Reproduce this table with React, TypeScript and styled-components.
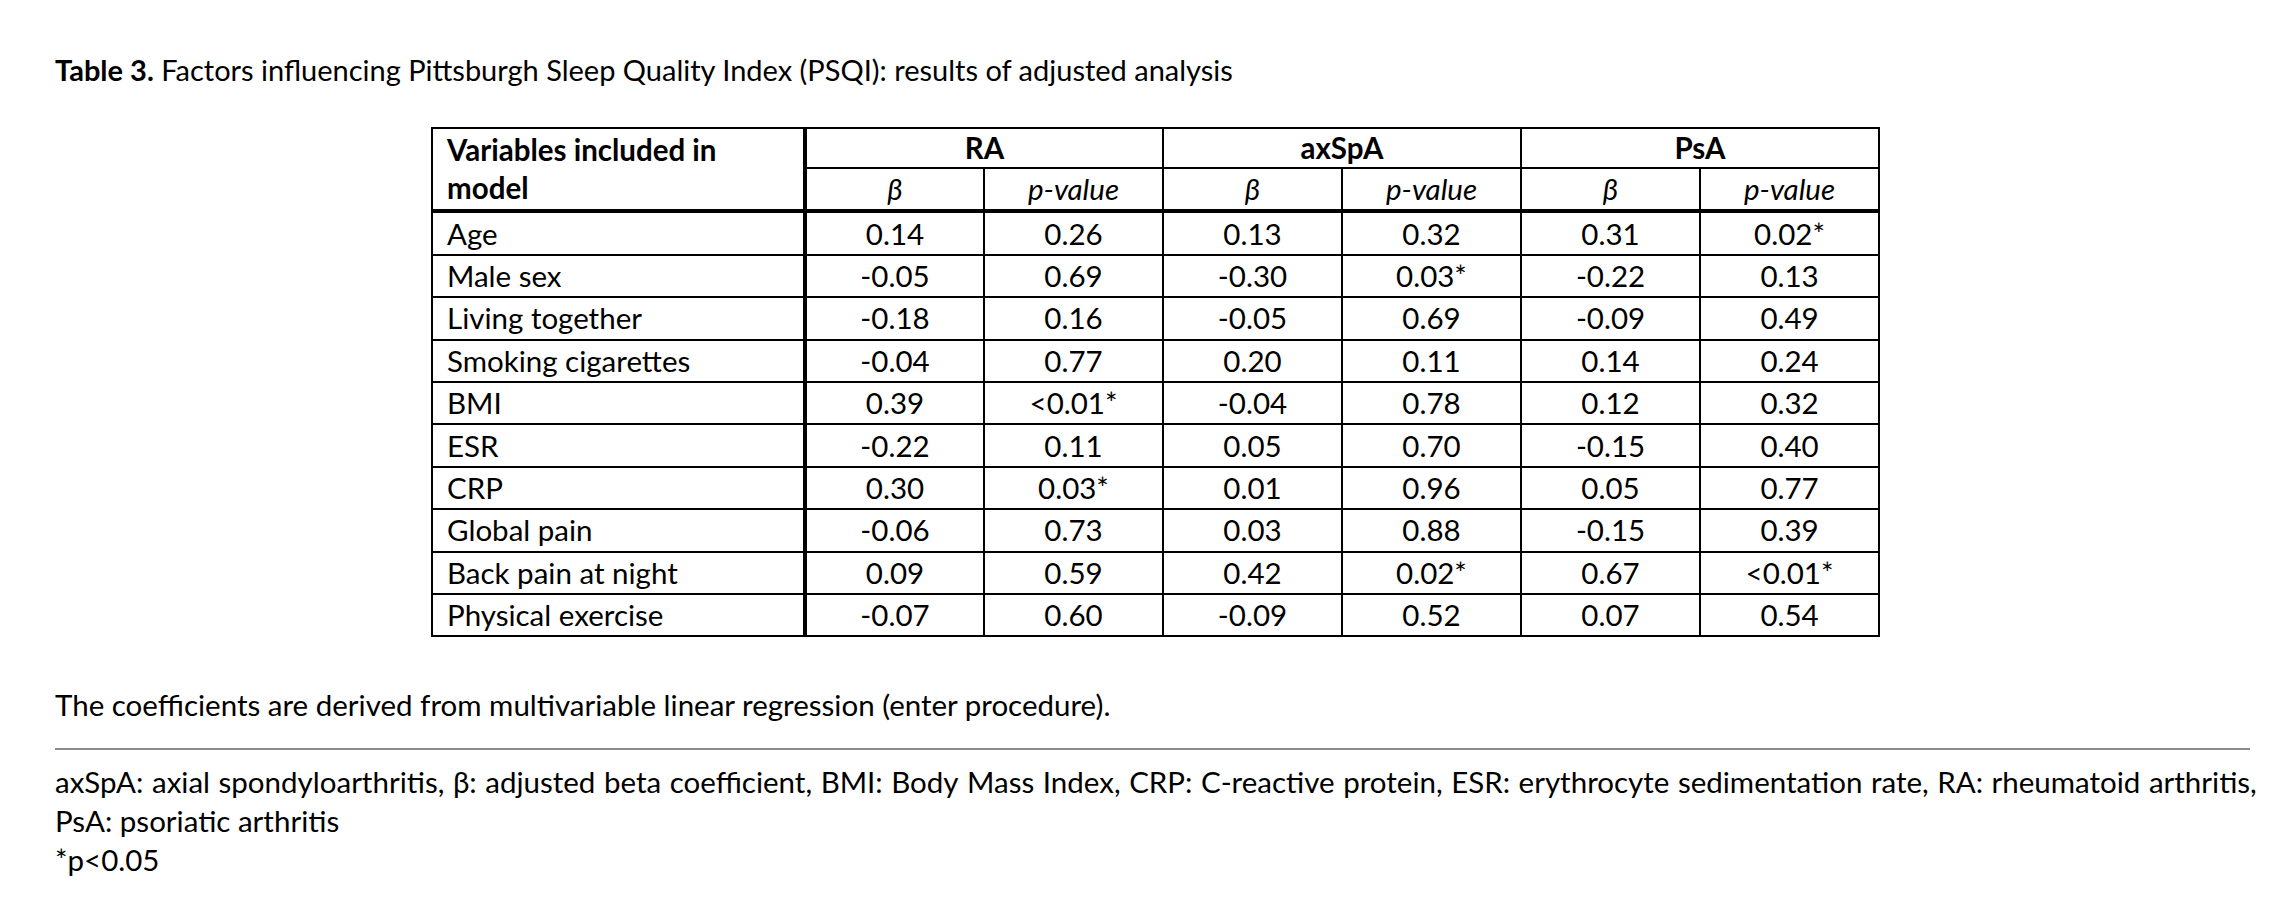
import React from 'react';
import styled, { createGlobalStyle } from 'styled-components';

const GlobalStyle = createGlobalStyle`
  html, body {
    margin: 0;
    padding: 0;
    background: #ffffff;
  }
  body {
    font-family: Lato, "Liberation Sans", sans-serif;
    color: #000000;
  }
`;

const Page = styled.div`
  width: 2285px;
  height: 910px;
  box-sizing: border-box;
  padding: 53px 28px 0 55px;
  font-size: 29.5px;
`;

const Caption = styled.div`
  font-size: 29px;
  line-height: 34px;
  height: 34px;
  white-space: nowrap;

  b {
    font-weight: 700;
  }
`;

const TableWrap = styled.div`
  margin: 40px 0 0 376px;
`;

const Grid = styled.table`
  border-collapse: collapse;
  table-layout: fixed;
  width: 1449px;
  border: 2px solid #000;
`;

const Cell = styled.td<{ $align?: 'left' | 'center'; $thickLeft?: boolean; $thickBottom?: boolean }>`
  border: 2px solid #000;
  border-left-width: ${(p) => (p.$thickLeft ? '4px' : '2px')};
  border-bottom-width: ${(p) => (p.$thickBottom ? '4px' : '2px')};
  padding: 0 14px;
  text-align: ${(p) => p.$align ?? 'center'};
  vertical-align: middle;
  height: 40.4px;
  line-height: 34px;
  white-space: nowrap;
`;

const HeadCell = styled(Cell)`
  font-weight: 700;
  height: 38px;
`;

const LabelHead = styled.th`
  border: 2px solid #000;
  border-bottom-width: 4px;
  padding: 0 14px;
  text-align: left;
  vertical-align: middle;
  font-weight: 700;
  line-height: 38px;
`;

const SubCell = styled(Cell)`
  font-style: italic;
  font-weight: 400;
`;

const Note = styled.p`
  margin: 49px 0 0;
  line-height: 38px;
`;

const Rule = styled.hr`
  margin: 24px 7px 0 0;
  border: none;
  border-top: 2px solid #8a8a8a;
  height: 0;
`;

const Abbrev = styled.div`
  margin-top: 13px;
  line-height: 38px;
`;

const Justified = styled.div`
  white-space: nowrap;
  display: flex;
  justify-content: space-between;
`;

const Line = styled.div`
  line-height: 39px;
`;

type Row = [string, string, string, string, string, string, string];

const rows: Row[] = [
  ['Age', '0.14', '0.26', '0.13', '0.32', '0.31', '0.02*'],
  ['Male sex', '-0.05', '0.69', '-0.30', '0.03*', '-0.22', '0.13'],
  ['Living together', '-0.18', '0.16', '-0.05', '0.69', '-0.09', '0.49'],
  ['Smoking cigarettes', '-0.04', '0.77', '0.20', '0.11', '0.14', '0.24'],
  ['BMI', '0.39', '<0.01*', '-0.04', '0.78', '0.12', '0.32'],
  ['ESR', '-0.22', '0.11', '0.05', '0.70', '-0.15', '0.40'],
  ['CRP', '0.30', '0.03*', '0.01', '0.96', '0.05', '0.77'],
  ['Global pain', '-0.06', '0.73', '0.03', '0.88', '-0.15', '0.39'],
  ['Back pain at night', '0.09', '0.59', '0.42', '0.02*', '0.67', '<0.01*'],
  ['Physical exercise', '-0.07', '0.60', '-0.09', '0.52', '0.07', '0.54'],
];

const groups = ['RA', 'axSpA', 'PsA'];

const abbrevWords =
  'axSpA: axial spondyloarthritis, β: adjusted beta coefficient, BMI: Body Mass Index, CRP: C-reactive protein, ESR: erythrocyte sedimentation rate, RA: rheumatoid arthritis,'.split(
    ' '
  );

const App: React.FC = () => {
  return (
    <Page>
      <GlobalStyle />
      <Caption>
        <b>Table 3.</b> Factors influencing Pittsburgh Sleep Quality Index (PSQI): results of adjusted analysis
      </Caption>

      <TableWrap>
        <Grid>
          <colgroup>
            <col style={{ width: 373 }} />
            {Array.from({ length: 6 }).map((_, i) => (
              <col key={i} style={{ width: 179 }} />
            ))}
          </colgroup>
          <thead>
            <tr>
              <LabelHead rowSpan={2}>
                Variables included in
                <br />
                model
              </LabelHead>
              {groups.map((g, i) => (
                <HeadCell as="th" key={g} colSpan={2} $thickLeft={i === 0}>
                  {g}
                </HeadCell>
              ))}
            </tr>
            <tr>
              {groups.map((g, i) => (
                <React.Fragment key={g}>
                  <SubCell as="th" $thickLeft={i === 0} $thickBottom>
                    β
                  </SubCell>
                  <SubCell as="th" $thickBottom>
                    p-value
                  </SubCell>
                </React.Fragment>
              ))}
            </tr>
          </thead>
          <tbody>
            {rows.map((r) => (
              <tr key={r[0]}>
                <Cell $align="left">{r[0]}</Cell>
                {r.slice(1).map((v, i) => (
                  <Cell key={i} $thickLeft={i === 0}>
                    {v}
                  </Cell>
                ))}
              </tr>
            ))}
          </tbody>
        </Grid>
      </TableWrap>

      <Note>The coefficients are derived from multivariable linear regression (enter procedure).</Note>
      <Rule />
      <Abbrev>
        <Justified>
          {abbrevWords.map((w, i) => (
            <span key={i}>{w}</span>
          ))}
        </Justified>
        <Line>PsA: psoriatic arthritis</Line>
        <Line>*p&lt;0.05</Line>
      </Abbrev>
    </Page>
  );
};

export default App;
